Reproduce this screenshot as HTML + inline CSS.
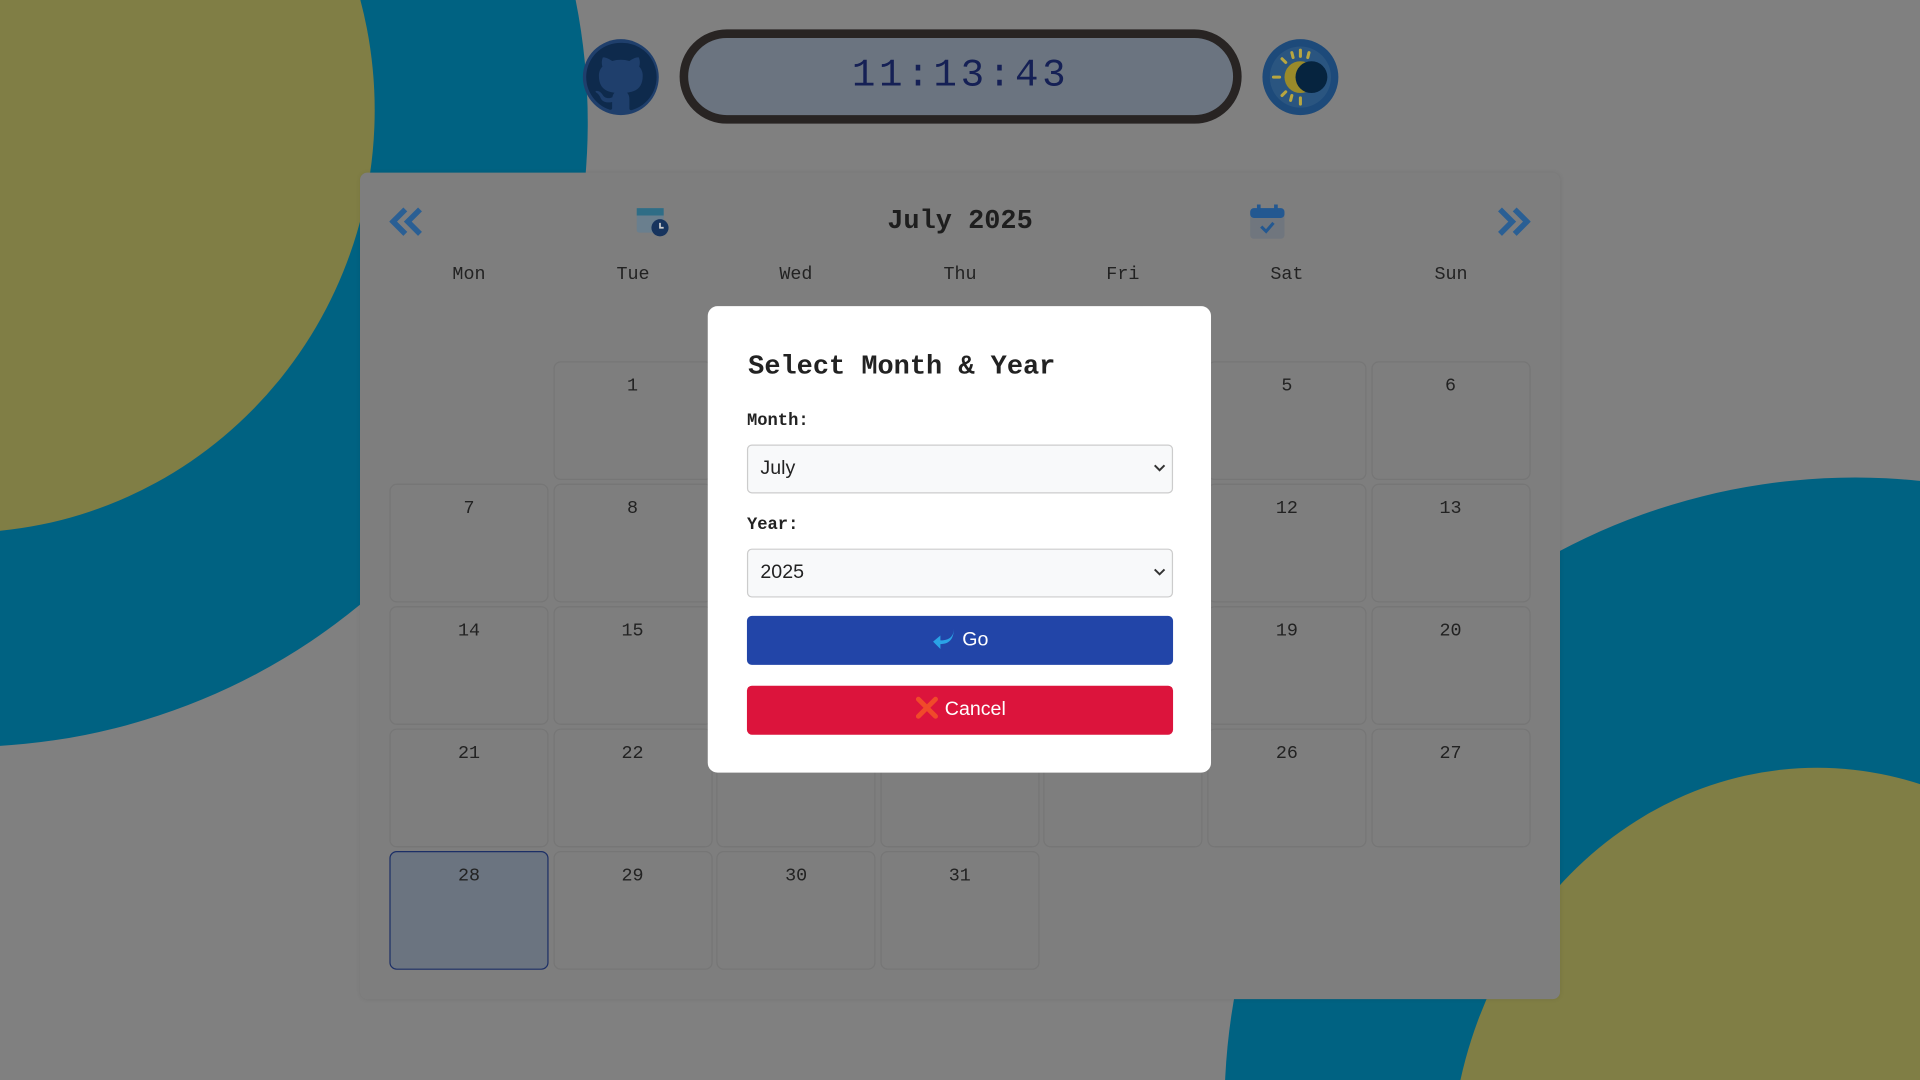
<!DOCTYPE html>
<html><head><meta charset="utf-8"><style>
html,body{margin:0;padding:0;width:1920px;height:1080px;overflow:hidden;background:#808080}
#w{position:relative;width:1920px;height:1080px;overflow:hidden}
#s{position:absolute;left:0;top:0;width:1568px;height:882px;transform:scale(1.22449);transform-origin:0 0;overflow:hidden;background:#808080;font-family:"Liberation Mono",monospace}
.b{position:absolute;border-radius:50%}
.card{position:absolute;left:294px;top:141px;width:980px;height:675px;background:#7e7e7e;border-radius:6px;box-shadow:0 0 4px rgba(0,0,0,.08)}
.cell{position:absolute;width:130px;height:97px;border:1px solid #767676;border-radius:6px;box-sizing:border-box;text-align:center;font-size:15px;color:#222;padding-top:11px}
.dn{position:absolute;top:75px;width:130px;text-align:center;font-size:15px;color:#222}
.modal{position:absolute;left:578px;top:250px;width:411px;height:381px;background:#fff;border-radius:8px}
.lbl{position:absolute;left:32px;font-size:14px;font-weight:bold;color:#222}
.sel{position:absolute;left:32px;width:348px;height:40px;border:1px solid #ccc;border-radius:4px;box-sizing:border-box;background:#f8f9fa;font-family:"Liberation Sans",sans-serif;font-size:16px;color:#222;padding:10px 0 0 10px}
.sel svg{position:absolute;right:5px;top:15px}
.btn{position:absolute;left:32px;width:348px;height:40px;border-radius:4px;color:#fff;font-family:"Liberation Sans",sans-serif;font-size:16px;text-align:center;line-height:40px}
</style></head><body><div id="w"><div id="s">
<div class="b" style="left:-540px;top:-410px;width:1020px;height:1020px;background:#006282"></div>
<div class="b" style="left:-370px;top:-255px;width:676px;height:690px;background:#807e45"></div>
<div class="b" style="left:1000px;top:390px;width:1030px;height:1030px;background:#006282"></div>
<div class="b" style="left:1184px;top:627px;width:600px;height:670px;background:#807e45"></div>

<svg style="position:absolute;left:475px;top:31px" width="64" height="64" viewBox="0 0 64 64"><circle cx="32" cy="32" r="31" fill="#1f3f6c"/><path d="M32 4a28 28 0 0 0-9 54.6c1.4.3 1.9-.6 1.9-1.3v-5c-7.8 1.7-9.4-3.3-9.4-3.3-1.3-3.2-3.1-4.1-3.1-4.1-2.5-1.7.2-1.7.2-1.7 2.8.2 4.300 2.9 4.3 2.9 2.5 4.3 6.6 3 8.2 2.3.3-1.8 1-3 1.8-3.7-6.2-.7-12.8-3.1-12.8-13.9 0-3.1 1.1-5.6 2.9-7.5-.3-.7-1.2-3.6.3-7.4 0 0 2.3-.8 7.7 2.9a26.6 26.6 0 0 1 14 0c5.4-3.7 7.7-2.9 7.7-2.9 1.5 3.8.6 6.7.3 7.4 1.8 2 2.9 4.4 2.9 7.5 0 10.8-6.6 13.2-12.8 13.900 1 .9 1.9 2.6 1.9 5.2v7.7c0 .7.5 1.6 1.9 1.3A28 28 0 0 0 32 4z" fill="#0e2a4c"/></svg>
<div style="position:absolute;left:555px;top:24px;width:459px;height:77px;border:7px solid #282423;border-radius:40px;box-sizing:border-box;background:#6b7480;text-align:center;line-height:62px;font-size:32px;color:#152055;letter-spacing:3px">11:13:43</div>
<svg style="position:absolute;left:1030px;top:31px" width="64" height="64" viewBox="0 0 64 64"><circle cx="32" cy="32" r="31" fill="#1d4a7a"/><circle cx="32" cy="32" r="25" fill="#2a5580"/><g stroke="#b8a640" stroke-width="2.5" stroke-linecap="round"><path d="M32 10v5M32 49v5M10 32h5M17 17l3 3M17 47l3-3M25 12l1 4M39 12l-1 4M24 51l1-4"/></g><circle cx="32" cy="32" r="13" fill="#9a8a2a"/><circle cx="41" cy="32" r="13" fill="#06243f"/></svg>

<div class="card">
<svg style="position:absolute;left:24px;top:28px" width="28" height="24" viewBox="0 0 28 24"><path d="M13 2 3 12l10 10M25 2 15 12l10 10" fill="none" stroke="#2a5f94" stroke-width="4.5"/></svg>
<svg style="position:absolute;left:225px;top:25px" width="28" height="28" viewBox="0 0 28 28"><rect x="1" y="4" width="22" height="20" rx="2" fill="#6a7f8e"/><rect x="1" y="4" width="22" height="6" fill="#2f6d86"/><circle cx="20" cy="20" r="7" fill="#17345e"/><path d="M20 16v4h3" stroke="#ccc" stroke-width="1.4" fill="none"/></svg>
<div style="position:absolute;left:0;width:980px;top:27px;text-align:center;font-size:22px;font-weight:bold;color:#1e1e1e">July 2025</div>
<svg style="position:absolute;left:726px;top:25px" width="30" height="30" viewBox="0 0 30 30"><rect x="1" y="4" width="28" height="25" rx="3" fill="#70767e"/><rect x="1" y="4" width="28" height="8" rx="3" fill="#235891"/><path d="M8 1v6M22 1v6" stroke="#235891" stroke-width="3"/><path d="M10 19l4 4 6-7" stroke="#235891" stroke-width="2.5" fill="none"/></svg>
<svg style="position:absolute;left:928px;top:28px" width="28" height="24" viewBox="0 0 28 24"><path d="M3 2l10 10L3 22M15 2l10 10-10 10" fill="none" stroke="#2a5f94" stroke-width="4.5"/></svg>
<div class="dn" style="left:24px">Mon</div><div class="dn" style="left:158px">Tue</div><div class="dn" style="left:291px">Wed</div><div class="dn" style="left:425px">Thu</div><div class="dn" style="left:558px">Fri</div><div class="dn" style="left:692px">Sat</div><div class="dn" style="left:826px">Sun</div>
</div>
<div id="cells"></div>
<script>
var h='';var d=1;
for(var r=0;r<5;r++)for(var c=0;c<7;c++){var i=r*7+c;if(i<1||d>31)continue;var x=318+c*133.6,y=295+r*100;
var st=d==28?'border-color:#1c2f66;background:#6b7480;':'';
h+='<div class="cell" style="left:'+x+'px;top:'+y+'px;'+st+'">'+d+'</div>';d++;}
document.getElementById('cells').innerHTML=h;
</script>
<div class="modal">
<div style="position:absolute;left:33px;top:37px;font-size:22px;font-weight:bold;color:#222">Select Month &amp; Year</div>
<div class="lbl" style="top:86px">Month:</div>
<div class="sel" style="top:113px">July<svg width="10" height="7" viewBox="0 0 10 7"><path d="M1 1l4 4 4-4" stroke="#333" stroke-width="1.6" fill="none"/></svg></div>
<div class="lbl" style="top:171px">Year:</div>
<div class="sel" style="top:198px">2025<svg width="10" height="7" viewBox="0 0 10 7"><path d="M1 1l4 4 4-4" stroke="#333" stroke-width="1.6" fill="none"/></svg></div>
<div class="btn" style="top:253px;background:#2245a8"><svg width="20" height="18" viewBox="0 0 20 18" style="vertical-align:-3px;margin-right:5px"><path d="M18 1c0 8-5 10-11 10V7L1 12l6 6v-4c8 0 11-5 11-13z" fill="#2aa3e6"/></svg>Go</div>
<div class="btn" style="top:310px;background:#dc143c"><svg width="20" height="20" viewBox="0 0 20 20" style="vertical-align:-4px;margin-right:5px"><path d="M3 3l14 14M17 3 3 17" stroke="#f04a2a" stroke-width="4" stroke-linecap="round"/></svg>Cancel</div>
</div>
</div></div></body></html>
